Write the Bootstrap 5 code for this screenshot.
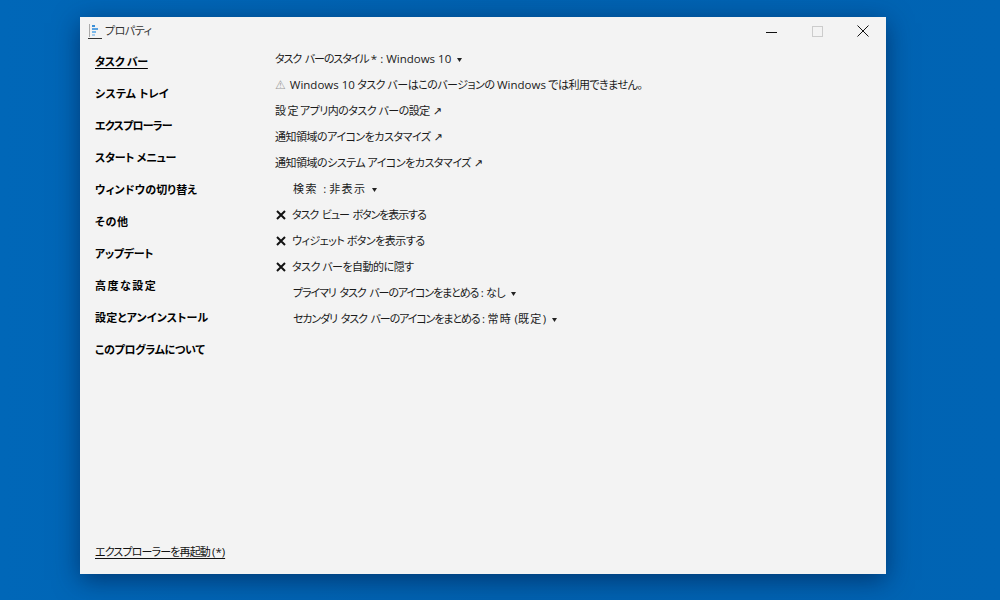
<!DOCTYPE html>
<html lang="ja">
<head>
    <meta charset="UTF-8">
    <title>プロパティ</title>
    <link rel="stylesheet" href="https://cdn.jsdelivr.net/npm/bootstrap@5.3.0/dist/css/bootstrap.min.css">
    <style>
        body {
            background: #0063b1;
            font-family: "Open Sans", "Noto Sans CJK JP", sans-serif;
            font-size: 11px;
            letter-spacing: -.5px;
            font-feature-settings: "palt";
            color: #1a1a1a;
            overflow: hidden;
        }
        .desk {
            height: 600px;
            padding: 17px 114px 26px 80px;
            background: linear-gradient(90deg, #0067b8, #0062b0 50%, #0064b4);
        }
        .prop-window {
            height: 557px;
            background: #f3f3f3;
            box-shadow: 0 6px 24px rgba(0, 20, 60, .55);
        }
        .title-bar { height: 28px; padding-left: 8px; color: #333; }
        .title-text { margin-left: 1px; }
        .win-btn { width: 46px; height: 28px; }
        .side-col { width: 195px; padding: 1px 0 0 15px; }
        .side-item {
            height: 32px;
            line-height: 32px;
            font-weight: 700;
            letter-spacing: -.3px;
            color: #000;
        }
        .track-a { letter-spacing: -.8px; }
        .track-b { letter-spacing: .15px; }
        .track-c { letter-spacing: .7px; }
        .track-d { letter-spacing: 1.5px; }
        .side-active { text-decoration: underline; text-underline-offset: 2px; }
        .restart-link { color: #111; letter-spacing: -.85px; text-decoration: underline; text-underline-offset: 2px; margin-bottom: 14px; }
        .main-col { padding: 1px 0 0 0; }
        .opt-row { height: 26px; line-height: 26px; white-space: nowrap; }
        .opt-indent { padding-left: 18px; }
        .check-mark { width: 17px; flex: none; padding-left: 1px; }
        .lat-text { font-size: 11.5px; letter-spacing: 0; }
        .tight-text { letter-spacing: -1.1px; word-spacing: 2px; }
        .wide-text { letter-spacing: 1.4px; }
        .warn-mark { font-family: "DejaVu Sans", sans-serif; font-size: 12px; letter-spacing: 0; color: #999; margin-right: 4px; }
        .link-arrow { font-family: "DejaVu Sans", sans-serif; font-size: 11px; letter-spacing: 0; margin-left: 3px; }
        .drop-mark { margin-left: 3px; }
    </style>
</head>
<body>
    <div class="desk">
        <div class="prop-window d-flex flex-column">
            <div class="title-bar d-flex align-items-center">
                <svg width="16" height="17" viewBox="0 0 16 17">
                    <rect x="1" y="1" width="1" height="13" fill="#aaa"/>
                    <rect x="4" y="2" width="3" height="2" fill="#3a8fd8"/>
                    <rect x="4" y="5" width="6" height="2" fill="#5aa2e0"/>
                    <rect x="4" y="8" width="4" height="2" fill="#7ab8ea"/>
                    <rect x="4" y="11" width="3" height="2" fill="#a6cdee"/>
                    <rect x="0" y="15" width="14" height="1" fill="#333"/>
                </svg>
                <span class="title-text">プロパティ</span>
                <div class="d-flex ms-auto">
                    <div class="win-btn d-flex align-items-center justify-content-center">
                        <svg width="11" height="11" viewBox="0 0 11 11"><path d="M0 6.5H11" stroke="#111"/></svg>
                    </div>
                    <div class="win-btn d-flex align-items-center justify-content-center">
                        <svg width="11" height="11" viewBox="0 0 11 11"><rect x=".5" y=".5" width="10" height="10" fill="none" stroke="#ccc"/></svg>
                    </div>
                    <div class="win-btn d-flex align-items-center justify-content-center">
                        <svg width="12" height="12" viewBox="0 0 12 12"><path d="M.5 .5L11.5 11.5M11.5 .5L.5 11.5" stroke="#111"/></svg>
                    </div>
                </div>
            </div>
            <div class="d-flex flex-grow-1">
                <div class="side-col d-flex flex-column">
                    <div class="side-item"><span class="side-active">タスク バー</span></div>
                    <div class="side-item track-b">システム トレイ</div>
                    <div class="side-item track-a">エクスプローラー</div>
                    <div class="side-item">スタート メニュー</div>
                    <div class="side-item track-b">ウィンドウの切り替え</div>
                    <div class="side-item track-c">その他</div>
                    <div class="side-item">アップデート</div>
                    <div class="side-item track-d">高度な設定</div>
                    <div class="side-item track-b">設定とアンインストール</div>
                    <div class="side-item">このプログラムについて</div>
                    <div class="mt-auto"><span class="restart-link d-inline-block">エクスプローラーを再起動 <span class="lat-text">(*)</span></span></div>
                </div>
                <div class="main-col flex-grow-1">
                    <div class="opt-row"><span class="tight-text">タスク バーのスタイル</span> <span class="lat-text">* : Windows 10</span> <span class="drop-mark"><svg width="5" height="4" viewBox="0 0 5 4"><path d="M0 0H5L2.5 4Z" fill="#222"/></svg></span></div>
                    <div class="opt-row"><span class="warn-mark">⚠</span><span class="lat-text">Windows 10</span> タスク バーはこのバージョンの <span class="lat-text">Windows</span> では利用できません。</div>
                    <div class="opt-row"><span class="wide-text">設定</span>アプリ内のタスク バーの設定<span class="link-arrow">↗</span></div>
                    <div class="opt-row">通知領域のアイコンをカスタマイズ<span class="link-arrow">↗</span></div>
                    <div class="opt-row">通知領域のシステム アイコンをカスタマイズ<span class="link-arrow">↗</span></div>
                    <div class="opt-row opt-indent"><span class="wide-text">検索</span> <span class="lat-text">&nbsp;:&nbsp;</span><span class="wide-text">非表示</span> <span class="drop-mark"><svg width="5" height="4" viewBox="0 0 5 4"><path d="M0 0H5L2.5 4Z" fill="#222"/></svg></span></div>
                    <div class="opt-row d-flex align-items-center"><span class="check-mark"><svg width="10" height="10" viewBox="0 0 10 10" class="d-block"><path d="M1 1L9 9M9 1L1 9" stroke="#111" stroke-width="2"/></svg></span><span class="tight-text">タスク ビュー ボタンを表示する</span></div>
                    <div class="opt-row d-flex align-items-center"><span class="check-mark"><svg width="10" height="10" viewBox="0 0 10 10" class="d-block"><path d="M1 1L9 9M9 1L1 9" stroke="#111" stroke-width="2"/></svg></span>ウィジェット ボタンを表示する</div>
                    <div class="opt-row d-flex align-items-center"><span class="check-mark"><svg width="10" height="10" viewBox="0 0 10 10" class="d-block"><path d="M1 1L9 9M9 1L1 9" stroke="#111" stroke-width="2"/></svg></span>タスク バーを自動的に隠す</div>
                    <div class="opt-row opt-indent"><span class="tight-text">プライマリ タスク バーのアイコンをまとめる</span> <span class="lat-text">:</span> なし <span class="drop-mark"><svg width="5" height="4" viewBox="0 0 5 4"><path d="M0 0H5L2.5 4Z" fill="#222"/></svg></span></div>
                    <div class="opt-row opt-indent"><span class="tight-text">セカンダリ タスク バーのアイコンをまとめる</span> <span class="lat-text">:</span> <span class="wide-text">常時</span> <span class="lat-text">(</span><span class="wide-text">既定</span><span class="lat-text">)</span> <span class="drop-mark"><svg width="5" height="4" viewBox="0 0 5 4"><path d="M0 0H5L2.5 4Z" fill="#222"/></svg></span></div>
                </div>
            </div>
        </div>
    </div>
    <script src="https://cdn.jsdelivr.net/npm/bootstrap@5.3.0/dist/js/bootstrap.bundle.min.js"></script>
</body>
</html>
